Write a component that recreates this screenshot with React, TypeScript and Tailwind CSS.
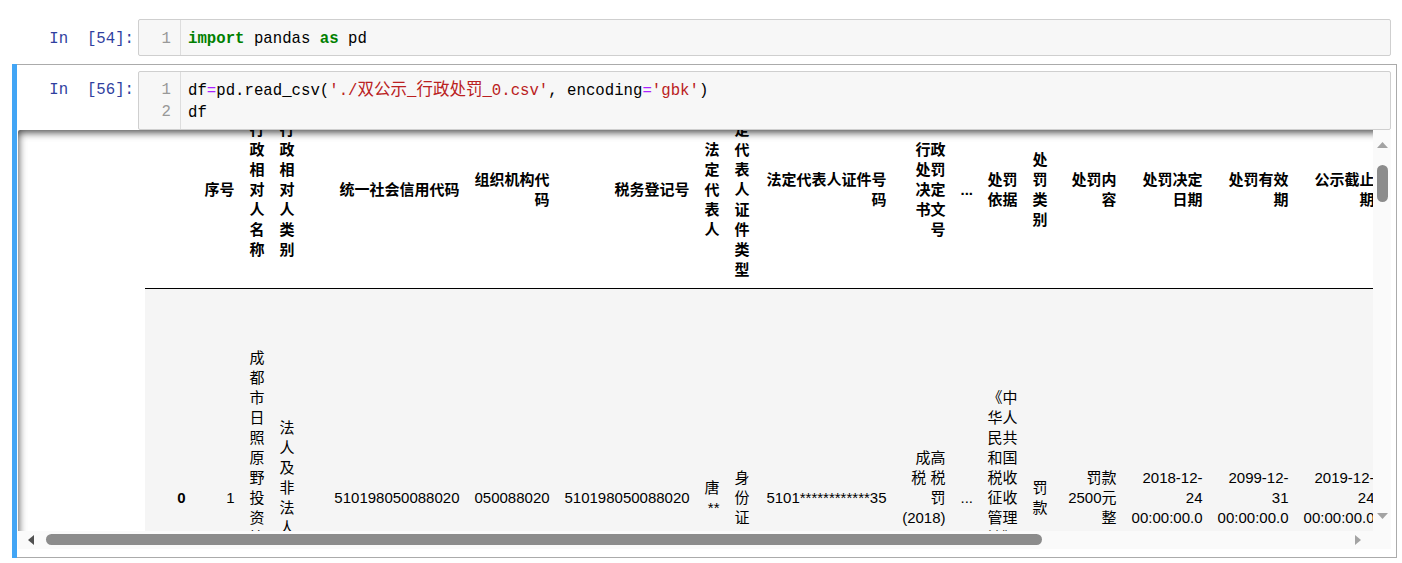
import { ReactNode } from 'react'

// one pandas column: width class, header text and the value of row 0
interface Column {
  w: string
  head: string
  cell: string
}

const columns: Column[] = [
  { w: 'w-[49px]', head: '序号', cell: '1' },
  { w: 'w-[30px]', head: '行\n政\n相\n对\n人\n名\n称', cell: '成\n都\n市\n日\n照\n原\n野\n投\n资\n管\n理\n有\n限\n公\n司' },
  { w: 'w-[30px]', head: '行\n政\n相\n对\n人\n类\n别', cell: '法\n人\n及\n非\n法\n人\n组\n织' },
  { w: 'w-[165px]', head: '统一社会信用代码', cell: '510198050088020' },
  { w: 'w-[90px]', head: '组织机构代\n码', cell: '050088020' },
  { w: 'w-[140px]', head: '税务登记号', cell: '510198050088020' },
  { w: 'w-[30px]', head: '法\n定\n代\n表\n人', cell: '唐\n**' },
  { w: 'w-[30px]', head: '法\n定\n代\n表\n人\n证\n件\n类\n型', cell: '身\n份\n证' },
  { w: 'w-[137px]', head: '法定代表人证件号\n码', cell: '5101************35' },
  { w: 'w-[59px]', head: '行政\n处罚\n决定\n书文\n号', cell: '成高\n税 税\n罚\n(2018)\n257号' },
  { w: 'w-[27px]', head: '...', cell: '...' },
  { w: 'w-[45px]', head: '处罚\n依据', cell: '《中\n华人\n民共\n和国\n税收\n征收\n管理\n法》\n第六\n十二\n条' },
  { w: 'w-[30px]', head: '处\n罚\n类\n别', cell: '罚\n款' },
  { w: 'w-[69px]', head: '处罚内\n容', cell: '罚款\n2500元\n整' },
  { w: 'w-[86px]', head: '处罚决定\n日期', cell: '2018-12-\n24\n00:00:00.0' },
  { w: 'w-[86px]', head: '处罚有效\n期', cell: '2099-12-\n31\n00:00:00.0' },
  { w: 'w-[86px]', head: '公示截止\n期', cell: '2019-12-\n24\n00:00:00.0' },
  { w: 'w-[120px]', head: '数据来源单位', cell: '国家税务总局\n成都高新技术\n产业开发区税\n务局' },
]

const thClass = 'px-[7.5px] py-[7.5px] text-right align-middle font-bold whitespace-pre border-b border-black'
const tdClass = 'h-[418px] px-[7.5px] py-[7.5px] text-right align-middle font-normal whitespace-pre'
const idxClass = 'h-[418px] px-[7.5px] py-[7.5px] text-right align-middle font-bold whitespace-pre'

function Prompt({ n }: { n: number }): JSX.Element {
  return (
    <div className="w-[120px] shrink-0 pr-[4px] pt-[9.5px] text-right text-[#303f9f] whitespace-pre">
      {`In\u00a0\u00a0[${n}]:`}
    </div>
  )
}

function InputBox({ lines }: { lines: ReactNode[] }): JSX.Element {
  return (
    <div className="flex flex-1 rounded-[2px] border border-[#cfcfcf] bg-[#f7f7f7]">
      <div className="w-[42px] shrink-0 border-r border-[#dddddd] pr-[9px] pt-[8.5px] pb-[4.5px] text-right text-[#999999]">
        {lines.map((_, i) => (
          <div key={i}>{i + 1}</div>
        ))}
      </div>
      <div className="flex-1 pl-[7px] pt-[8.5px] pb-[4.5px] whitespace-pre">
        {lines.map((line, i) => (
          <div key={i}>{line}</div>
        ))}
      </div>
    </div>
  )
}

const kw = 'font-bold text-[#008000]'
const op = 'text-[#aa22ff]'
const str = 'text-[#ba2121]'
const cjk = 'text-[16.5px]'

function ArrowUp(): JSX.Element {
  return (
    <svg width="11" height="6" viewBox="0 0 11 6">
      <polygon points="0,6 5.5,0 11,6" fill="#a3a3a3" />
    </svg>
  )
}

function ArrowDown(): JSX.Element {
  return (
    <svg width="11" height="6" viewBox="0 0 11 6">
      <polygon points="0,0 11,0 5.5,6" fill="#a3a3a3" />
    </svg>
  )
}

function ArrowLeft(): JSX.Element {
  return (
    <svg width="6" height="10" viewBox="0 0 6 10">
      <polygon points="6,0 6,10 0,5" fill="#505050" />
    </svg>
  )
}

function ArrowRight(): JSX.Element {
  return (
    <svg width="6" height="10" viewBox="0 0 6 10">
      <polygon points="0,0 6,5 0,10" fill="#a3a3a3" />
    </svg>
  )
}

function DataFrame(): JSX.Element {
  return (
    <table className="w-[1357px] table-fixed border-collapse font-['Liberation_Sans','Noto_Sans_CJK_SC',sans-serif] text-[15px] leading-[20px] text-black">
      <colgroup>
        <col className="w-[48px]" />
        {columns.map((c, i) => (
          <col key={i} className={c.w} />
        ))}
      </colgroup>
      <thead>
        <tr>
          <th className={thClass}></th>
          {columns.map((c, i) => (
            <th key={i} className={thClass}>
              {c.head}
            </th>
          ))}
        </tr>
      </thead>
      <tbody>
        <tr className="bg-[#f5f5f5]">
          <th className={idxClass}>0</th>
          {columns.map((c, i) => (
            <td key={i} className={tdClass}>
              {c.cell}
            </td>
          ))}
        </tr>
      </tbody>
    </table>
  )
}

function Output(): JSX.Element {
  return (
    <div className="grid grid-cols-[1fr_18px] grid-rows-[401px_18px] rounded-[2px] shadow-[inset_0_2px_8px_rgba(0,0,0,0.8)]">
      <div className="flex items-start overflow-hidden">
        <div className="w-[127px] shrink-0" />
        <div className="-mt-[37px] shrink-0">
          <DataFrame />
        </div>
      </div>
      {/* vertical scrollbar */}
      <div className="flex flex-col items-center bg-[#fafafa] pt-[12.5px] pb-[12px]">
        <ArrowUp />
        <div className="mt-[16.5px] h-[37px] w-[11px] rounded-full bg-[#8c8c8c]" />
        <div className="flex-1" />
        <ArrowDown />
      </div>
      {/* horizontal scrollbar */}
      <div className="flex items-center bg-[#fafafa] pl-[10px] pr-[12px]">
        <ArrowLeft />
        <div className="ml-[12px] h-[11px] w-[996px] rounded-full bg-[#8c8c8c]" />
        <div className="flex-1" />
        <ArrowRight />
      </div>
      <div className="bg-[#fafafa]" />
    </div>
  )
}

export default function App(): JSX.Element {
  return (
    <div className="h-[563px] w-[1402px] overflow-hidden bg-white pt-[13px] font-['Liberation_Mono','Noto_Sans_CJK_SC',monospace] text-[15.7px] leading-[21.6px] text-black">
      <div className="ml-[12px] flex w-[1385px] border border-transparent p-[5px]">
        <Prompt n={54} />
        <InputBox
          lines={[
            <>
              <span className={kw}>import</span> pandas <span className={kw}>as</span> pd
            </>,
          ]}
        />
      </div>

      <div className="relative mt-[2px] ml-[12px] w-[1385px] border border-[#ababab] px-[5px] pt-[6px] pb-[8px] before:absolute before:-left-px before:-top-px before:h-[calc(100%+2px)] before:w-[5px] before:bg-[#42a5f5] before:content-['']">
        <div className="flex">
          <Prompt n={56} />
          <InputBox
            lines={[
              <>
                df<span className={op}>=</span>pd.read_csv(
                <span className={str}>
                  './<span className={cjk}>双公示</span>_<span className={cjk}>行政处罚</span>_0.csv'
                </span>
                , encoding<span className={op}>=</span>
                <span className={str}>'gbk'</span>)
              </>,
              <>df</>,
            ]}
          />
        </div>
        <Output />
      </div>
    </div>
  )
}
